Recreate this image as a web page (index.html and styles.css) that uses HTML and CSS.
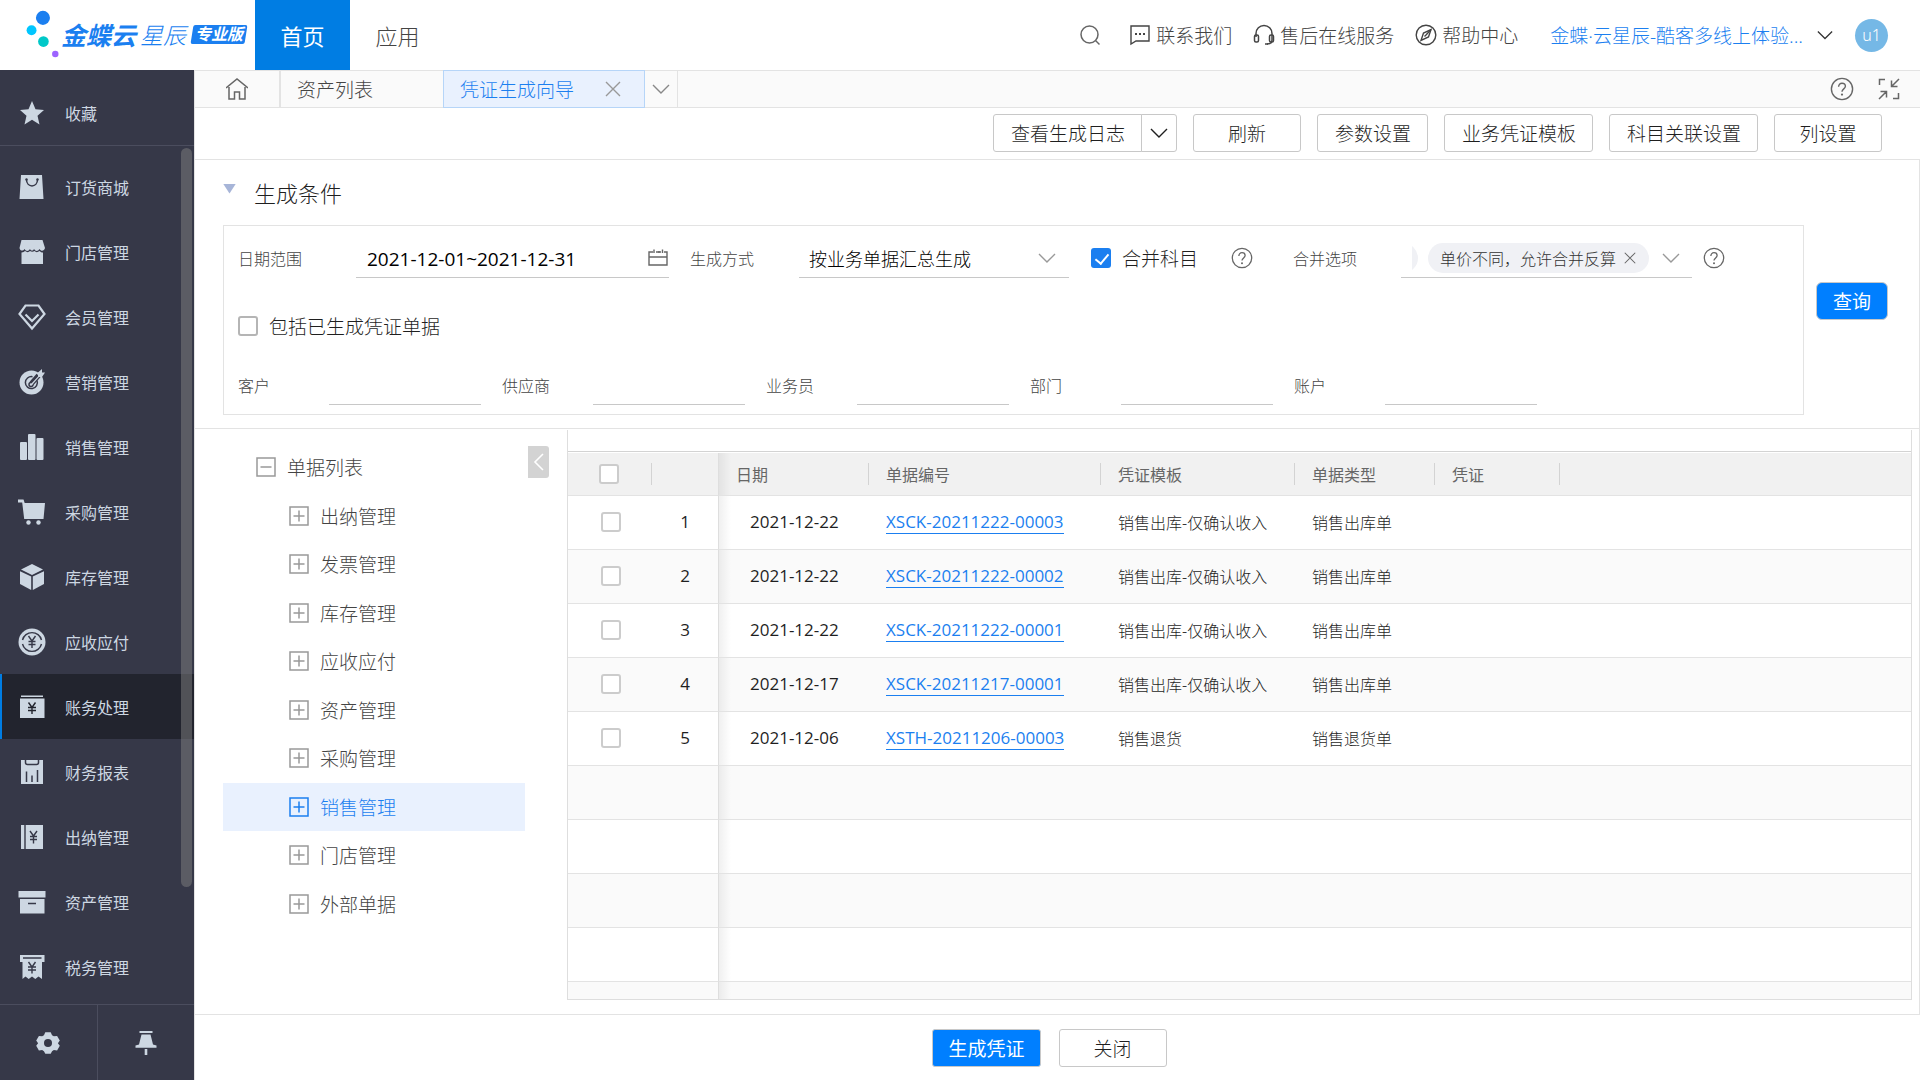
FILE: index.html
```html
<!DOCTYPE html>
<html lang="zh-CN">
<head>
<meta charset="utf-8">
<title>凭证生成向导</title>
<link rel="stylesheet" href="styles.css">
</head>
<body>
<svg class="sprite" aria-hidden="true">
  <symbol id="chevron" viewBox="0 0 18 18"><path d="M1 5l8 8 8-8" fill="none" stroke="currentColor" stroke-width="1.4"/></symbol>
  <symbol id="close" viewBox="0 0 16 16"><path d="M1 1l14 14M15 1L1 15" fill="none" stroke="currentColor" stroke-width="1.4"/></symbol>
  <symbol id="help" viewBox="0 0 24 24"><g fill="none" stroke="currentColor" stroke-width="1.4"><circle cx="12" cy="12" r="10.6"/><path d="M8.6 9.8c0-2.2 1.4-3.6 3.4-3.6s3.4 1.3 3.4 3.1c0 2.5-3.4 2.700-3.400 5.500"/></g><circle cx="12" cy="17.600" r="1.100" fill="currentColor"/></symbol>
  <symbol id="plus-box" viewBox="0 0 20 20"><path d="M1 1h18v18H1zM4.500 10h11M10 4.500v11" fill="none" stroke="currentColor" stroke-width="1.500"/></symbol>
  <symbol id="minus-box" viewBox="0 0 20 20"><path d="M1 1h18v18H1zM4.500 10h11" fill="none" stroke="currentColor" stroke-width="1.500"/></symbol>
</svg>

<header class="topbar">
  <a class="logo" href="#">
    <svg class="logo-mark" viewBox="0 0 40 52" aria-hidden="true">
      <circle cx="21" cy="9" r="7.400" fill="#1b7ff0"/><circle cx="9" cy="22" r="5.200" fill="#00c6ff"/>
      <circle cx="21.500" cy="34" r="5.600" fill="#00c8c8"/><circle cx="34" cy="47" r="3.400" fill="#9d63ff"/>
    </svg>
    <span class="logo-name">金蝶云</span><span class="logo-sub">星辰</span><span class="logo-badge">专业版</span>
  </a>
  <nav class="topnav"><a class="topnav-item active" href="#">首页</a><a class="topnav-item" href="#">应用</a></nav>
  <div class="top-tools">
    <button class="icon-btn search-btn" aria-label="搜索"><svg class="i22" viewBox="0 0 22 22"><g fill="none" stroke="currentColor" stroke-width="1.500"><circle cx="10.500" cy="10.500" r="8.500"/><path d="M16.500 16.500l4 4"/></g></svg></button>
    <a class="top-link" href="#"><svg class="i22" viewBox="0 0 22 22"><path d="M2 2h18v15H7l-5 3z" fill="none" stroke="currentColor" stroke-width="1.400"/><path d="M6 9h2v2H6zM10 9h2v2h-2zM14 9h2v2h-2z" fill="currentColor"/></svg>联系我们</a>
    <a class="top-link" href="#"><svg class="i22" viewBox="0 0 22 22"><g fill="none" stroke="currentColor" stroke-width="1.500"><path d="M3 13V9.500a8 8 0 0116 0V16c0 3-2.500 4-5 4"/><rect x="1.500" y="11" width="4" height="7" rx="1.500"/><rect x="16.500" y="11" width="4" height="7" rx="1.500"/><path d="M12 20h3"/></g></svg>售后在线服务</a>
    <a class="top-link" href="#"><svg class="i22" viewBox="0 0 22 22"><g fill="none" stroke="currentColor" stroke-width="1.400"><circle cx="11" cy="11" r="9.800"/><path d="M16 5.500l-2.500 7.500-7.500 3.500L8.500 9z"/><path d="M11 11l5-5.500M9.500 12.500l1.500-1.500"/></g></svg>帮助中心</a>
    <button class="account">金蝶·云星辰-酷客多线上体验...<svg class="i16" aria-hidden="true"><use href="#chevron"/></svg></button>
    <span class="avatar">u1</span>
  </div>
</header>

<div class="body">
<aside class="sidebar">
  <a class="side-item favorite" href="#"><svg class="i28" viewBox="0 0 28 28"><path d="M14 2l3.500 8.200 8.500.8-6.500 5.800 2 8.600L14 20.800l-7.500 4.600 2-8.600L2 11l8.500-.8z" fill="currentColor"/></svg>收藏</a>
  <nav class="side-list">
    <a class="side-item" href="#"><svg class="i28" viewBox="0 0 28 28"><path d="M3 2h21l1.500 24h-24z" fill="currentColor"/><path d="M8.500 6.500c0 8.500 11 8.500 11 0" fill="none" stroke="#363848" stroke-width="1.500"/><circle cx="8.500" cy="6.500" r="1.200" fill="#363848"/><circle cx="19.500" cy="6.500" r="1.200" fill="#363848"/></svg>订货商城</a>
    <a class="side-item" href="#"><svg class="i28" viewBox="0 0 28 28"><path d="M3.500 2h21L27 10c-1 3.500-4 3.500-5.500 1-1.500 2.500-4 2.500-5.500 0h-4c-1.500 2.500-4 2.500-5.500 0C5 13.500 2 13 1.500 10z" fill="currentColor"/><path d="M12 11c1 2 3 2 4 0z" fill="currentColor"/><path d="M3.500 14.500c2 0 2.500-.8 3.500-1.500 2 1.500 3.500 1.500 5 0 1.500 1 3 1 4.500 0 1.500 1.500 3 1.500 5 0 1 .8 1.500 1.500 3.500 1.500V26h-21.500z" fill="currentColor"/></svg>门店管理</a>
    <a class="side-item" href="#"><svg class="i28" viewBox="0 0 28 28"><g fill="none" stroke="currentColor" stroke-width="2.200"><path d="M7.500 2.500h13L26.500 11 14 25.500 1.500 11z"/><path d="M7.500 11.500L14 18l6.500-6.500"/></g></svg>会员管理</a>
    <a class="side-item" href="#"><svg class="i28" viewBox="0 0 28 28"><circle cx="13.500" cy="14.500" r="12" fill="currentColor"/><g fill="none" stroke="#363848" stroke-width="1.500"><path d="M19 12.500a6 6 0 11-4.500-3.800"/><path d="M13 14.500a2 2 0 102 2"/></g><path d="M13.500 15.500l7-8" stroke="#363848" stroke-width="5"/><path d="M13 16l7-7.500V4.500L24 1v3.500H27L24 9h-3l-7 8z" fill="currentColor"/></svg>营销管理</a>
    <a class="side-item" href="#"><svg class="i28" viewBox="0 0 28 28"><g fill="currentColor"><rect x="2" y="9" width="7" height="18" rx="1"/><rect x="10" y="1" width="7.500" height="26" rx="1"/><rect x="18.500" y="5" width="7" height="22" rx="1"/></g></svg>销售管理</a>
    <a class="side-item" href="#"><svg class="i28" viewBox="0 0 28 28"><path d="M0 1.500h5.500l1.200 3.500H27l-1.500 16H6.200L4.200 4.500H0z" fill="currentColor"/><circle cx="10.500" cy="24.500" r="2.200" fill="currentColor"/><circle cx="20.500" cy="24.500" r="2.200" fill="currentColor"/></svg>采购管理</a>
    <a class="side-item" href="#"><svg class="i28" viewBox="0 0 28 28"><g fill="currentColor"><path d="M14 1l11 5.500-11 5.500L3 6.500z"/><path d="M2 8.200l11.200 5.300V27L2 21z"/><path d="M26 8.200l-11.200 5.300V27L26 21z"/></g></svg>库存管理</a>
    <a class="side-item" href="#"><svg class="i28" viewBox="0 0 28 28"><circle cx="14" cy="14" r="13.500" fill="currentColor"/><g fill="none" stroke="#363848" stroke-width="1.400"><path d="M4.500 12a9.800 9.800 0 0119 0M23.500 16a9.800 9.800 0 01-19 0"/><path d="M10.500 8l3.500 5 3.500-5M14 13v7M10.500 13.500h7M10.500 16.500h7"/></g></svg>应收应付</a>
    <a class="side-item active" href="#" aria-current="page"><svg class="i28" viewBox="0 0 28 28"><path d="M3 2.500h22v1.500H3zM2 5.500h24.500V25H2z" fill="currentColor"/><path d="M10.500 9.500l3.500 5 3.500-5M14 14.500v6.500M10 14.500h8M10 17.500h8" fill="none" stroke="#22242e" stroke-width="1.400"/></svg>账务处理</a>
    <a class="side-item" href="#"><svg class="i28" viewBox="0 0 28 28"><path d="M3 2h22v24H3z" fill="currentColor"/><path d="M7.500 2v2.500c0 1.500 1 2 2 2h9c1 0 2-.5 2-2V2M8.500 13.500V24M14 17.500V24M19.500 12v12" fill="none" stroke="#363848" stroke-width="1.500"/></svg>财务报表</a>
    <a class="side-item" href="#"><svg class="i28" viewBox="0 0 28 28"><path d="M3 2h22v24H3z" fill="currentColor"/><path d="M7 2v24M12 8l3.500 5L19 8M15.500 13v7.500M12 13.500h7M12 16.500h7" fill="none" stroke="#363848" stroke-width="1.400"/></svg>出纳管理</a>
    <a class="side-item" href="#"><svg class="i28" viewBox="0 0 28 28"><path d="M.5 3h27v6.500h-27zM2 11h24.500v14.500H2z" fill="currentColor"/><path d="M10 15.500h8" stroke="#363848" stroke-width="1.500"/></svg>资产管理</a>
    <a class="side-item" href="#"><svg class="i28" viewBox="0 0 28 28"><path d="M2 2h24.500v7H24v17l-3.500-2.500-3.200 2.500-3.300-2.500-3.300 2.500-3.200-2.500L4.500 26V9H2z" fill="currentColor"/><path d="M5 5h18.500M10.500 9l3.500 5 3.500-5M14 14v6.500M10 14h8M10 17h8" fill="none" stroke="#363848" stroke-width="1.400"/></svg>税务管理</a>
    <span class="side-scroll"></span>
  </nav>
  <div class="side-foot">
    <button aria-label="设置"><svg class="i28" viewBox="0 0 28 28"><path d="M11 2h6l1.500 3.300 2 1.200 3.600-.4 3 5.200L25 14.200l2.100 2.900-3 5.200-3.600-.4-2 1.200L17 26h-6l-1.500-2.900-2-1.200-3.600.4-3-5.200L3 14.200.9 11.300l3-5.200 3.600.4 2-1.200z" fill="currentColor" transform="translate(1.400 1.400) scale(.9)"/><circle cx="14" cy="14" r="4" fill="#363848"/></svg></button>
    <button aria-label="固定"><svg class="i28" viewBox="0 0 28 28"><path d="M7.500 2h13v2h-13zM9.500 5.500h9l2.500 10 3.500 1v2.200h-21v-2.200l3.500-1zM12.700 20h2.600v6h-2.600z" fill="currentColor"/></svg></button>
  </div>
</aside>

<div class="main">
  <nav class="tabs">
    <a class="tab tab-home" href="#" aria-label="主页"><svg class="i22" viewBox="0 0 22 22"><path d="M0 10L11 1l11 9M3 9v12h5.500v-7h5v7H19V9" fill="none" stroke="currentColor" stroke-width="1.500"/></svg></a>
    <a class="tab tab-list" href="#">资产列表</a>
    <a class="tab tab-active" href="#">凭证生成向导<svg class="i16" aria-hidden="true"><use href="#close"/></svg></a>
    <button class="tab tab-more" aria-label="更多页签"><svg class="i18"><use href="#chevron"/></svg></button>
    <span class="tabs-right">
      <button class="icon-btn" aria-label="帮助"><svg class="i24"><use href="#help"/></svg></button>
      <button class="icon-btn" aria-label="收起"><svg class="i22" viewBox="0 0 22 22"><path d="M1.500 7V1.500H7M20.500 15v5.500H15M21 1l-7.500 7.500M13.500 2.500v6h6M1 21l7.500-7.500M8.500 19.500v-6h-6" fill="none" stroke="currentColor" stroke-width="1.500"/></svg></button>
    </span>
  </nav>

  <div class="toolbar">
    <div class="split"><button class="btn">查看生成日志</button><button class="btn split-arrow" aria-label="更多日志"><svg class="i18"><use href="#chevron"/></svg></button></div>
    <button class="btn wide">刷新</button>
    <button class="btn">参数设置</button>
    <button class="btn">业务凭证模板</button>
    <button class="btn">科目关联设置</button>
    <button class="btn wide">列设置</button>
  </div>

  <div class="content">
  <section class="conditions">
    <h2 class="cond-title"><span class="triangle"></span>生成条件</h2>
    <form class="cond-row">
      <div class="cond-box">
        <div class="line">
          <div class="field date-field"><label for="range">日期范围</label>
            <div class="underline"><input id="range" type="text" value="2021-12-01~2021-12-31"><svg class="i20" viewBox="0 0 20 20"><path d="M5 4H1v13h18V4h-3M8 4h5M1 9h18M6 1.500v3.500M11 3v2M14.500 1.500v3.500" fill="none" stroke="currentColor" stroke-width="1.400"/></svg></div></div>
          <div class="field mode-field"><label for="mode">生成方式</label>
            <div class="underline"><select id="mode"><option>按业务单据汇总生成</option></select><svg class="i18 gray"><use href="#chevron"/></svg></div></div>
          <label class="check"><input type="checkbox" checked>合并科目</label>
          <svg class="i22 help-merge"><use href="#help"/></svg>
          <div class="field merge-field"><span class="label" id="merge-label">合并选项</span>
            <div class="underline" role="group" aria-labelledby="merge-label">
              <div class="tags"><span class="tag tag-cut"></span><span class="tag">单价不同，允许合并反算<button type="button" class="icon-btn" aria-label="移除"><svg class="i12"><use href="#close"/></svg></button></span></div>
              <svg class="i18 gray"><use href="#chevron"/></svg></div></div>
          <svg class="i22"><use href="#help"/></svg>
        </div>
        <div class="line line-check"><label class="check"><input type="checkbox">包括已生成凭证单据</label></div>
        <div class="line line-filters">
          <div class="field filter"><label for="f1">客户</label><div class="underline"><input id="f1" type="text"></div></div>
          <div class="field filter"><label for="f2">供应商</label><div class="underline"><input id="f2" type="text"></div></div>
          <div class="field filter"><label for="f3">业务员</label><div class="underline"><input id="f3" type="text"></div></div>
          <div class="field filter"><label for="f4">部门</label><div class="underline"><input id="f4" type="text"></div></div>
          <div class="field filter"><label for="f5">账户</label><div class="underline"><input id="f5" type="text"></div></div>
        </div>
      </div>
      <button type="button" class="btn primary query">查询</button>
    </form>
  </section>

  <section class="work">
    <div class="tree">
      <ul class="tree-list">
        <li class="root"><svg class="i20"><use href="#minus-box"/></svg>单据列表</li>
        <li><svg class="i20"><use href="#plus-box"/></svg>出纳管理</li>
        <li><svg class="i20"><use href="#plus-box"/></svg>发票管理</li>
        <li><svg class="i20"><use href="#plus-box"/></svg>库存管理</li>
        <li><svg class="i20"><use href="#plus-box"/></svg>应收应付</li>
        <li><svg class="i20"><use href="#plus-box"/></svg>资产管理</li>
        <li><svg class="i20"><use href="#plus-box"/></svg>采购管理</li>
        <li class="selected"><svg class="i20"><use href="#plus-box"/></svg>销售管理</li>
        <li><svg class="i20"><use href="#plus-box"/></svg>门店管理</li>
        <li><svg class="i20"><use href="#plus-box"/></svg>外部单据</li>
      </ul>
      <button class="tree-fold" aria-label="收起列表"><svg class="i18" viewBox="0 0 18 18"><path d="M13 1L5 9l8 8" fill="none" stroke="#fff" stroke-width="1.600"/></svg></button>
    </div>
    <div class="grid">
      <table>
        <colgroup><col class="c-check"><col class="c-num"><col class="c-date"><col class="c-code"><col class="c-tpl"><col class="c-type"><col class="c-voucher"><col></colgroup>
        <thead><tr><th class="sel sep"><input type="checkbox" aria-label="全选"></th><th></th><th class="sep fixed-edge"><span>日期</span></th><th class="sep">单据编号</th><th class="sep">凭证模板</th><th class="sep">单据类型</th><th class="sep">凭证</th><th></th></tr></thead>
        <tbody>
          <tr><td class="sel"><input type="checkbox" aria-label="选择 1"></td><td class="num">1</td><td class="date fixed-edge">2021-12-22</td><td><a href="#">XSCK-20211222-00003</a></td><td>销售出库-仅确认收入</td><td>销售出库单</td><td></td><td></td></tr>
          <tr><td class="sel"><input type="checkbox" aria-label="选择 2"></td><td class="num">2</td><td class="date fixed-edge">2021-12-22</td><td><a href="#">XSCK-20211222-00002</a></td><td>销售出库-仅确认收入</td><td>销售出库单</td><td></td><td></td></tr>
          <tr><td class="sel"><input type="checkbox" aria-label="选择 3"></td><td class="num">3</td><td class="date fixed-edge">2021-12-22</td><td><a href="#">XSCK-20211222-00001</a></td><td>销售出库-仅确认收入</td><td>销售出库单</td><td></td><td></td></tr>
          <tr><td class="sel"><input type="checkbox" aria-label="选择 4"></td><td class="num">4</td><td class="date fixed-edge">2021-12-17</td><td><a href="#">XSCK-20211217-00001</a></td><td>销售出库-仅确认收入</td><td>销售出库单</td><td></td><td></td></tr>
          <tr><td class="sel"><input type="checkbox" aria-label="选择 5"></td><td class="num">5</td><td class="date fixed-edge">2021-12-06</td><td><a href="#">XSTH-20211206-00003</a></td><td>销售退货</td><td>销售退货单</td><td></td><td></td></tr>
          <tr><td></td><td></td><td class="fixed-edge"></td><td></td><td></td><td></td><td></td><td></td></tr>
          <tr><td></td><td></td><td class="fixed-edge"></td><td></td><td></td><td></td><td></td><td></td></tr>
          <tr><td></td><td></td><td class="fixed-edge"></td><td></td><td></td><td></td><td></td><td></td></tr>
          <tr><td></td><td></td><td class="fixed-edge"></td><td></td><td></td><td></td><td></td><td></td></tr>
          <tr><td></td><td></td><td class="fixed-edge"></td><td></td><td></td><td></td><td></td><td></td></tr>
        </tbody>
      </table>
    </div>
  </section>
  </div>

  <footer class="actions"><button class="btn primary wide">生成凭证</button><button class="btn wide">关闭</button></footer>
</div>
</div>
</body>
</html>
```
FILE: styles.css
```css
* { box-sizing: border-box; }
body {
  margin: 0;
  height: 100vh;
  display: flex;
  flex-direction: column;
  font-family: "Noto Sans", "Noto Sans CJK SC", sans-serif;
  font-weight: 300;
  font-size: 16px;
  color: #1f1f1f;
  background: #fff;
}
button, input, select { font: inherit; color: inherit; }
button { cursor: pointer; }
a { color: inherit; text-decoration: none; }
svg { flex: none; display: block; }
.sprite { display: none; }
.i12 { width: 12px; height: 12px; }
.i16 { width: 16px; height: 16px; }
.i18 { width: 18px; height: 18px; }
.i20 { width: 20px; height: 20px; }
.i22 { width: 22px; height: 22px; }
.i24 { width: 24px; height: 24px; }
.i28 { width: 28px; height: 28px; }
.gray { color: #999; }
.icon-btn { border: 0; padding: 0; background: none; color: #666; }

/* top bar */
.topbar { flex: none; height: 70px; display: flex; }
.logo { width: 255px; display: flex; align-items: center; padding: 0 0 2px 23px; color: #1b7ff0; white-space: nowrap; font-style: italic; }
.logo-mark { width: 38px; height: 52px; }
.logo-name { font-size: 25px; font-weight: 700; }
.logo-sub { font-size: 23px; margin-left: 4px; }
.logo-badge { position: relative; z-index: 0; margin-left: 5px; padding: 0 4px; font-size: 16px; line-height: 19px; font-weight: 700; color: #fff; }
.logo-badge::before { content: ""; position: absolute; z-index: -1; inset: 0 1px; border-radius: 2px; background: #1b7ff0; transform: skewX(-9deg); }
.topnav { display: flex; font-size: 22px; }
.topnav-item { width: 95px; display: flex; align-items: center; justify-content: center; color: #444; }
.topnav-item.active { background: #007de3; color: #fff; font-weight: 400; }
.top-tools { margin-left: auto; display: flex; align-items: center; padding-right: 32px; font-size: 19px; color: #444; }
.search-btn { margin-right: 28px; }
.top-link { display: flex; align-items: center; gap: 5px; margin-right: 21px; white-space: nowrap; }
.account { display: flex; align-items: center; gap: 14px; border: 0; padding: 0; margin: 0 22px 0 11px; background: none; color: #1b7ff0; white-space: nowrap; }
.account svg { color: #333; }
.avatar { width: 33px; height: 33px; border-radius: 50%; background: #75b8e6; color: #fff; font-size: 16px; line-height: 33px; text-align: center; }

.body { flex: 1; min-height: 0; display: flex; }

/* sidebar */
.sidebar { flex: none; width: 194px; display: flex; flex-direction: column; background: #363848; color: #cdd7e2; font-weight: 400; }
.side-item { height: 65px; flex: none; display: flex; align-items: center; gap: 19px; padding-left: 18px; }
.favorite { height: 76px; padding-top: 10px; border-bottom: 1px solid #4b4d5e; }
.side-list { position: relative; flex: 1; min-height: 0; overflow: hidden; padding-top: 8px; display: flex; flex-direction: column; }
.side-item.active { background: #22242e; border-left: 2px solid #007de3; padding-left: 16px; }
.side-scroll { position: absolute; top: 2px; right: 2px; width: 11px; height: 739px; border-radius: 6px; background: rgba(128, 128, 128, .5); }
.side-foot { flex: none; height: 76px; display: flex; border-top: 1px solid #4b4d5e; }
.side-foot button { flex: 1; display: flex; align-items: center; justify-content: center; border: 0; background: none; color: #cdd7e2; }
.side-foot button + button { border-left: 1px solid #4b4d5e; }

/* main column */
.main { flex: 1; min-width: 0; display: flex; flex-direction: column; border-left: 1px solid #e3e3e3; }
.tabs { flex: none; height: 38px; display: flex; background: #fafafa; border: solid #e3e3e3; border-width: 1px 0; font-size: 19px; color: #444; }
.tab { display: flex; align-items: center; }
.tab-home { width: 86px; justify-content: center; border-right: 2px solid #e3e3e3; color: #666; }
.tab-list { width: 162px; padding-left: 16px; }
.tab-active { width: 202px; margin: -1px 0; padding: 0 23px 0 16px; justify-content: space-between; background: #e9f1fe; border: 1px solid #b6d5f8; color: #1b7ff0; }
.tab-active svg { color: #999; }
.tab-more { width: 33px; justify-content: center; padding: 0; border: 0; border-right: 1px solid #e3e3e3; background: none; color: #888; }
.tabs-right { margin-left: auto; display: flex; align-items: center; gap: 24px; padding-right: 20px; }
.toolbar { flex: none; height: 51px; display: flex; justify-content: flex-end; align-items: center; gap: 16px; padding: 0 38px 1px 0; }
.btn { height: 38px; padding: 0 16px 0 17px; border: 1px solid #c8c8c8; border-radius: 3px; background: #fff; font-size: 19px; white-space: nowrap; }
.btn.wide { min-width: 108px; padding: 0 15px; }
.btn.primary { background: #007fff; color: #fff; font-weight: 400; }
.split { display: flex; }
.split .btn:first-child { border-radius: 3px 0 0 3px; }
.split .split-arrow { width: 36px; padding: 0; display: flex; align-items: center; justify-content: center; margin-left: -1px; border-radius: 0 3px 3px 0; }

.content { flex: 1; min-height: 0; display: flex; flex-direction: column; border: solid #e3e3e3; border-width: 1px 1px 1px 0; }

/* conditions */
.conditions { flex: none; padding: 0 31px 13px 28px; border-bottom: 1px solid #e3e3e3; }
.cond-title { height: 65px; margin: 0; padding-bottom: 2px; display: flex; align-items: center; gap: 18px; font-size: 22px; font-weight: 300; }
.triangle { width: 13px; height: 10px; margin-bottom: 6px; background: #a7b5d8; clip-path: polygon(0 0, 100% 0, 50% 100%); }
.cond-row { display: flex; align-items: center; gap: 12px; margin: 0; }
.cond-box { flex: 1; height: 190px; padding: 12px 14px 0; border: 1px solid #e3e3e3; }
.query { width: 72px; padding: 0; border-radius: 6px; margin-top: -38px; }
.line { display: flex; align-items: center; height: 40px; }
.line-check { margin-top: 28px; }
.line-filters { margin-top: 19px; }
.field { display: flex; align-items: center; height: 40px; flex: none; }
.field label, .label { flex: none; color: #444; }
.underline { flex: 1; min-width: 0; height: 40px; display: flex; align-items: center; border-bottom: 1px solid #c8c8c8; color: #666; }
.underline input, .underline select { flex: 1; min-width: 0; height: 38px; padding: 2px 0 0; border: 0; outline: 0; background: none; appearance: none; color: #000; }
.date-field { width: 431px; margin-right: 21px; }
.date-field label { width: 118px; }
.date-field input { font-size: 19px; padding-left: 11px; }
.date-field svg { margin-right: 1px; }
.mode-field { width: 379px; margin-right: 22px; }
.mode-field label { width: 109px; }
.mode-field select { font-size: 18px; padding-left: 10px; }
.mode-field .gray { margin-right: 13px; }
.check { display: flex; align-items: center; gap: 11px; font-size: 19px; white-space: nowrap; }
.check input, .sel input { appearance: none; flex: none; width: 20px; height: 20px; margin: 0; border: 2px solid #b5b5b5; border-radius: 3px; background: #fff; }
.check input:checked { border: 0; background: #1b7ff0; }
.check input:checked::before { content: ""; display: block; width: 6px; height: 11px; margin: 3px 0 0 7px; border: solid #fff; border-width: 0 2px 2px 0; transform: rotate(40deg); }
.help-merge { margin: 0 40px 0 33px; }
.line > .i22 { color: #666; }
.merge-field { width: 399px; margin-right: 11px; }
.merge-field .label { width: 108px; }
.merge-field .gray { margin: 0 12px 0 13px; }
.tags { flex: 1; min-width: 0; margin-left: 11px; display: flex; justify-content: flex-end; gap: 10px; overflow: hidden; }
.tag { flex: none; height: 30px; display: flex; align-items: center; gap: 8px; padding: 0 13px 0 12px; border-radius: 15px; background: #f0f1f5; color: #333; white-space: nowrap; }
.tag-cut { width: 60px; }
.filter { width: 243px; margin-right: 21px; }
.filter label { width: 91px; }

/* work area */
.work { flex: 1; min-height: 0; display: flex; padding: 1px 7px 14px 28px; }
.tree { flex: none; width: 344px; display: flex; align-items: flex-start; }
.tree-list { flex: none; width: 302px; height: 485px; margin: 13px 3px 0 0; padding: 0; display: grid; grid-auto-rows: 1fr; list-style: none; font-size: 19px; color: #444; }
.tree-list li { display: flex; align-items: center; gap: 11px; padding-left: 66px; }
.tree-list li.root { padding-left: 33px; }
.tree-list svg { color: #999; }
.tree-list li.selected, .tree-list .selected svg { color: #1b7ff0; background: #e9f1fe; }
.tree-fold { width: 21px; height: 32px; margin-top: 16px; padding: 0; display: flex; align-items: center; justify-content: center; border: 0; border-radius: 0 3px 3px 0; background: #d3d3d3; }
.grid { flex: 1; min-width: 0; overflow: hidden; padding-top: 21px; border: solid #dedede; border-width: 0 1px 1px; }
table { width: 100%; table-layout: fixed; border-collapse: separate; border-spacing: 0; border-top: 1px solid #d3d3d3; padding-top: 1px; }
.c-check { width: 84px; }
.c-num { width: 66px; }
.c-date { width: 151px; }
.c-code { width: 232px; }
.c-tpl { width: 194px; }
.c-type { width: 140px; }
.c-voucher { width: 125px; }
th { height: 43px; padding: 0 0 1px 17px; background: #f1f1f1; border-bottom: 1px solid #e3e3e3; font-weight: 400; text-align: left; color: #666; }
th.sep { background: linear-gradient(#d3d3d3, #d3d3d3) right center / 1px 22px no-repeat #f1f1f1; }
td { height: 54px; padding: 0 0 2px 17px; border-bottom: 1px solid #e3e3e3; white-space: nowrap; }
tbody tr:nth-child(even) { background: #fafafa; }
.fixed-edge { border-left: 1px solid #dedede; }
td.fixed-edge { background: linear-gradient(90deg, rgba(0, 0, 0, .06), transparent 12px); }
th.fixed-edge { background: linear-gradient(#d3d3d3, #d3d3d3) right center / 1px 22px no-repeat, linear-gradient(90deg, rgba(0, 0, 0, .06), transparent 12px) #f1f1f1; }
td.date { padding-left: 31px; }
td.num { padding-left: 0; text-align: center; }
td.num, td.date, td a { font-size: 17px; }
td.sel { padding-left: 33px; }
th.sel { padding-left: 31px; }
.sel input { display: block; border-color: #ccc; }
td a { display: inline-block; line-height: 23px; color: #1b7ff0; border-bottom: 1px solid #1b7ff0; }
td.num, td.date, td a, .date-field input { font-family: "Open Sans", "Noto Sans CJK SC", sans-serif; font-weight: 400; }

.actions { flex: none; height: 65px; display: flex; justify-content: center; align-items: center; gap: 18px; padding: 0 16px 0 0; }
```
